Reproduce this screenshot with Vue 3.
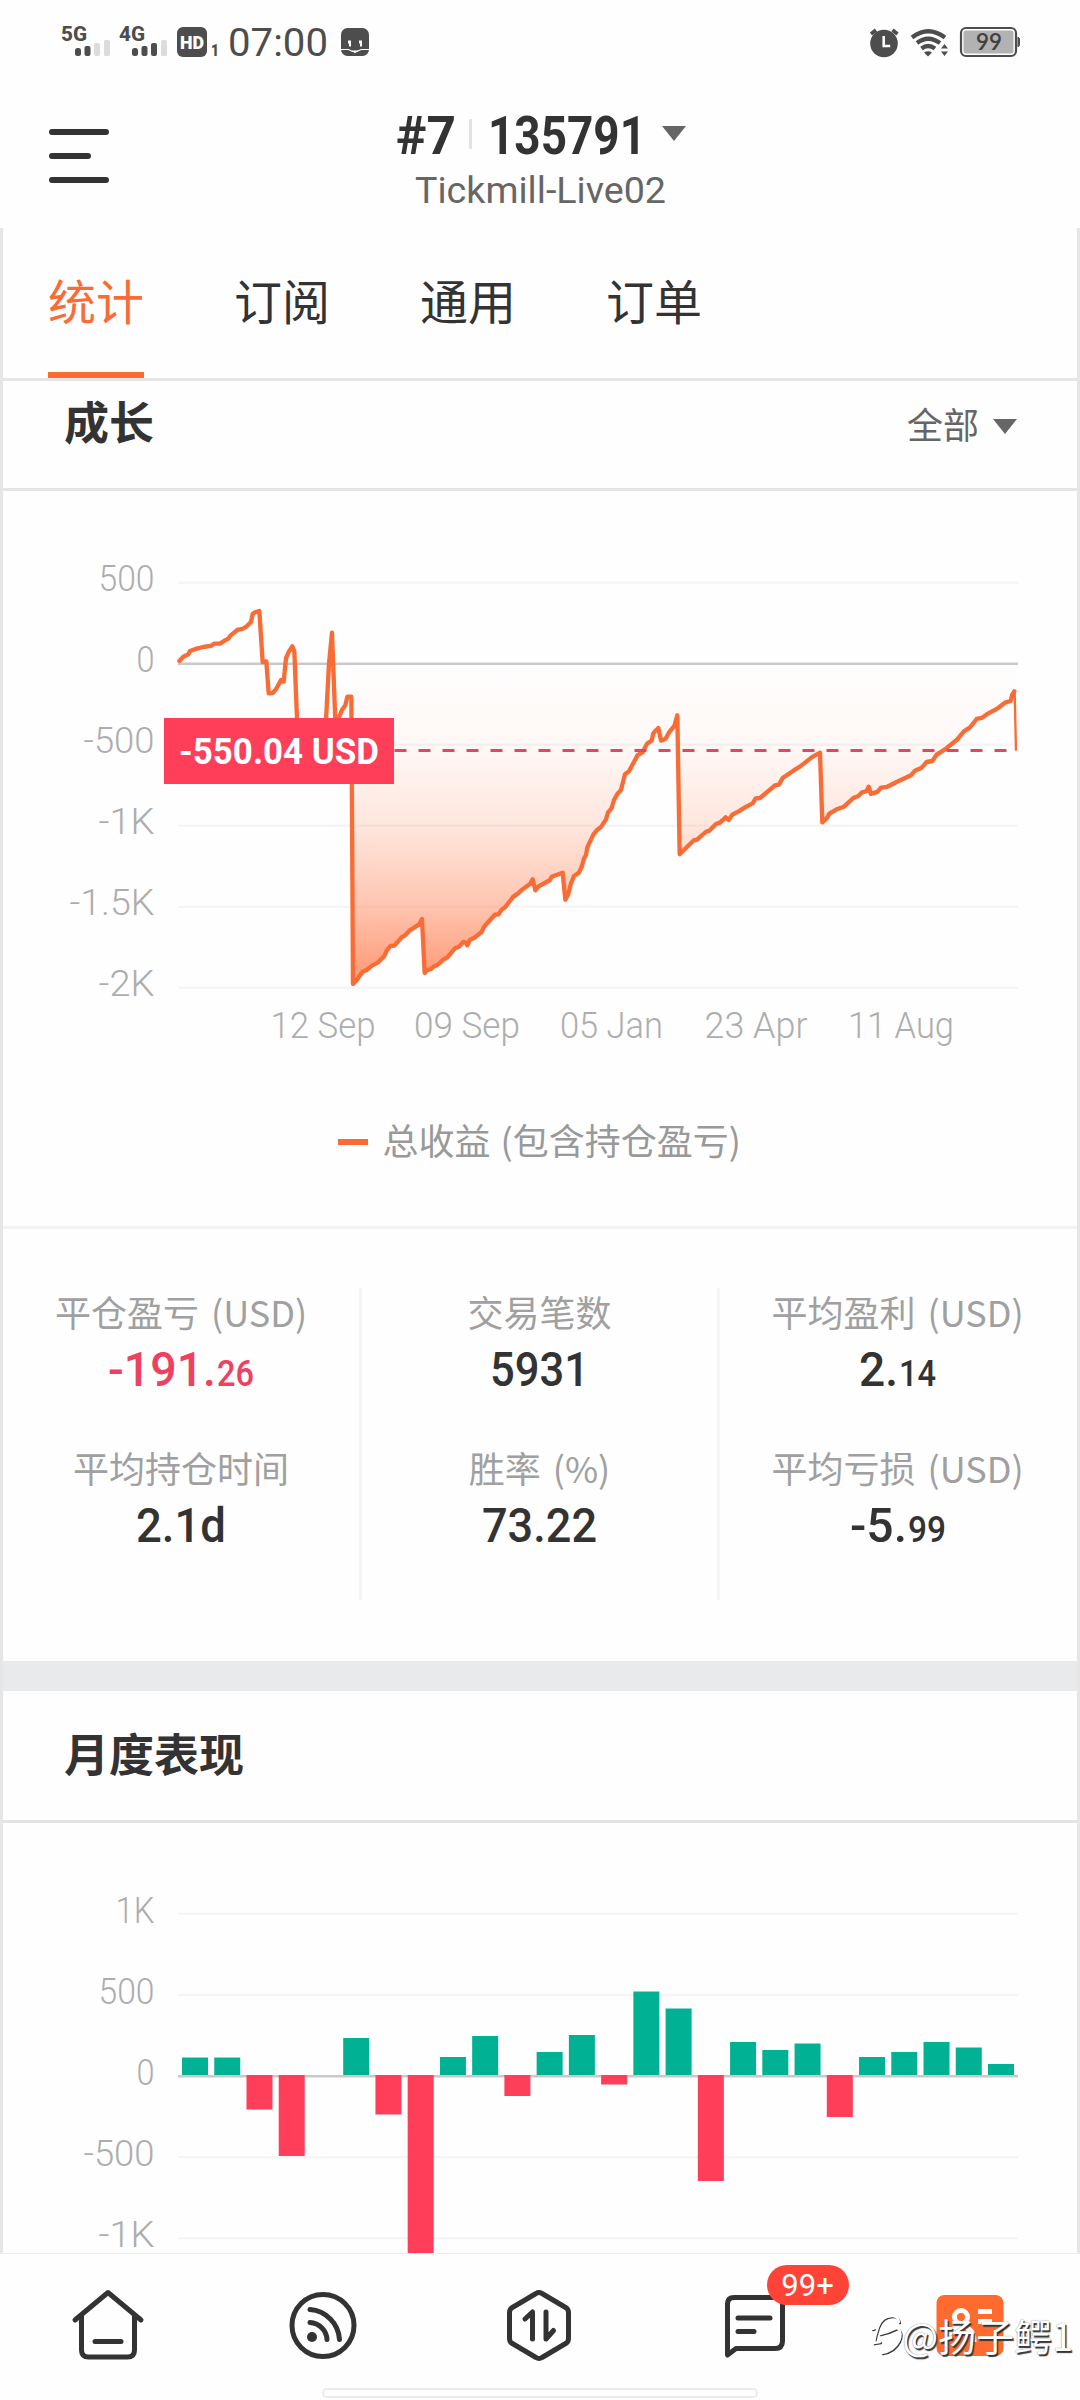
<script setup>
import { h } from 'vue'

const Fit = (p) =>
  h('svg', { width: p.w, height: p.box, style: 'display:block;overflow:visible;flex:none' }, [
    h('text', {
      x: 0,
      y: p.base,
      textLength: p.w,
      lengthAdjust: 'spacingAndGlyphs',
      fill: 'currentColor',
      'font-family': 'Roboto, sans-serif',
      'font-size': p.size,
      'font-weight': p.weight
    }, p.text)
  ])
Fit.props = ['text', 'w', 'box', 'base', 'size', 'weight']

const tabs = ['统计', '订阅', '通用', '订单']

const columns = [
  [
    { label: '平仓盈亏 (USD)', big: '-191.', bw: 108, small: '26', sw: 37, red: true },
    { label: '平均持仓时间', big: '2.1d', bw: 90 }
  ],
  [
    { label: '交易笔数', big: '5931', bw: 99 },
    { label: '胜率 (%)', big: '73.22', bw: 115 }
  ],
  [
    { label: '平均盈利 (USD)', big: '2.', bw: 39, small: '14', sw: 37 },
    { label: '平均亏损 (USD)', big: '-5.', bw: 57, small: '99', sw: 38 }
  ]
]

const growthTicks = [
  { t: '500', y: 92, w: 56 },
  { t: '0', y: 173, w: 18 },
  { t: '-500', y: 254, w: 71 },
  { t: '-1K', y: 335, w: 56 },
  { t: '-1.5K', y: 416, w: 85 },
  { t: '-2K', y: 497, w: 56 }
]
const dates = [
  { t: '12 Sep', x: 320, w: 105 },
  { t: '09 Sep', x: 464, w: 106 },
  { t: '05 Jan', x: 608.5, w: 103 },
  { t: '23 Apr', x: 753, w: 103 },
  { t: '11 Aug', x: 898, w: 106 }
]

// Curve samples, three units per pixel
const left = '388,363 400,350 415,343 420,333 440,326 460,321 485,317 492,311 510,311 522,303 535,296 542,286 562,270 577,267 590,259 603,246 608,222 615,217 628,213 638,366 649,364 656,460 668,459 678,448 693,420 701,425 708,355 716,336 727,319 733,335 742,560 760,640 800,650 827,560 837,371 846,278 856,545 868,530 876,510 886,496 892,470 904,470 909,1332 920,1320 938,1295 950,1290 967,1276 983,1268 1003,1248 1010,1232 1021,1218 1033,1217 1056,1191 1064,1187 1078,1172 1108,1153 1116,1137 1124,1299 1132,1291 1143,1287 1150,1280 1162,1275 1180,1259 1192,1252 1215,1225 1226,1221 1240,1206 1247,1207 1252,1216 1260,1199 1273,1193 1295,1176 1302,1160 1336,1123 1345,1124 1355,1109 1365,1102 1390,1070 1405,1060 1415,1050 1440,1032 1448,1018 1456,1051 1465,1040 1500,1020 1505,1010 1538,998'
const right = '16,1079 25,1062 33,1030 42,1008 57,998 66,978 72,955 78,945 82,922 100,884 112,869 122,862 138,838 144,818 155,804 162,780 172,762 183,750 195,703 207,694 217,675 233,645 247,638 262,610 275,602 280,580 287,572 295,564 303,602 317,596 328,576 343,558 352,526 359,943 400,902 412,898 428,884 440,874 447,873 468,852 480,848 497,832 506,840 517,824 536,814 555,802 578,790 587,775 600,774 645,736 657,734 668,714 700,692 720,680 755,652 780,638 787,847 800,835 808,821 830,808 852,800 880,774 895,768 905,758 920,753 926,740 933,762 953,755 963,743 980,741 1010,726 1053,706 1065,692 1085,683 1100,666 1117,663 1130,644 1155,628 1175,612 1190,600 1212,574 1230,562 1250,537 1265,534 1285,520 1310,507 1335,488 1352,483 1357,463 1363,454'
const parse = (s, dx) => s.split(' ').map((p) => { const [x, y] = p.split(',').map(Number); return [x + dx, y] })
const pts = [...parse(left, 0), ...parse(right, 1530)]
const line = 'M' + pts.map((p) => p.join(' ')).join('L')
const areaPts = pts.slice(pts.findIndex((p) => p[0] === 904))
const area = 'M904 371L' + areaPts.map((p) => p.join(' ')).join('L') + 'V371Z'

const monthTicks = [
  { t: '1K', y: 91, w: 39 },
  { t: '500', y: 172.3, w: 56 },
  { t: '0', y: 253.5, w: 18 },
  { t: '-500', y: 334.5, w: 71 },
  { t: '-1K', y: 415.5, w: 56 }
]
const months = [17.5, 17.5, -34.5, -81, 0, 37, -39.5, -190, 18, 39, -21, 23, 40, -9.5, 83.5, 66.5, -106, 33, 25, 31.5, -42, 18, 23, 33, 27.5, 11]
</script>

<template>
  <div class="screen">
    <div class="status">
      <svg class="status-left" width="340" height="84" viewBox="0 0 340 84">
        <g font-family="Roboto, sans-serif" fill="#4d4d4d">
          <text x="61" y="40.500" font-size="20.500" font-weight="800" textLength="26" lengthAdjust="spacingAndGlyphs">5G</text>
          <text x="119" y="40.500" font-size="20.500" font-weight="800" textLength="26" lengthAdjust="spacingAndGlyphs">4G</text>
          <text x="211" y="56" font-size="17" font-weight="900" textLength="8" lengthAdjust="spacingAndGlyphs">1</text>
          <text x="228" y="56" font-size="38.500" textLength="100" lengthAdjust="spacingAndGlyphs">07:00</text>
        </g>
        <g fill="#4d4d4d">
          <rect x="75" y="48" width="6" height="8" rx="2.500" /><rect x="84.500" y="46" width="6" height="10" rx="2" />
          <rect x="132" y="48" width="6" height="8" rx="2.500" /><rect x="141.500" y="46" width="6" height="10" rx="2" /><rect x="151" y="43" width="6" height="13" rx="2" />
        </g>
        <g fill="#dcdcdc">
          <rect x="94" y="43" width="6" height="13" rx="2" /><rect x="104" y="40" width="6" height="16" rx="1.500" />
          <rect x="161" y="40" width="6" height="16" rx="1.500" />
        </g>
        <rect x="177" y="27" width="30" height="30" rx="6" fill="#4d4d4d" />
        <text x="180" y="48.500" font-family="Roboto, sans-serif" font-size="19" font-weight="900" fill="#fff" textLength="24" lengthAdjust="spacingAndGlyphs">HD</text>
      </svg>
      <svg width="30" height="84" viewBox="340 0 30 84">
        <rect x="341" y="28" width="28" height="28" rx="6.500" fill="#4d4d4d" />
        <path d="M348 40.500h3v6h-2v-3h-1zM359 40.500h3v6h-2v-3h-1z" fill="#fff" />
        <path d="M341 49.500h7.500l4 2h4.500l4-2h8" fill="none" stroke="#fff" stroke-width="1.200" />
        <path d="M351.500 50.500h7l-3.500 2.800z" fill="#fff" />
      </svg>
      <svg class="status-right" width="152" height="84" viewBox="868 0 152 84">
        <circle cx="884" cy="43.500" r="13.800" fill="#4d4d4d" />
        <path d="M883.700 36v10h6.500" fill="none" stroke="#fff" stroke-width="2.600" />
        <path d="M871 34l5-4M892.500 30l5 4" stroke="#4d4d4d" stroke-width="3.600" />
        <g fill="none" stroke="#4d4d4d" stroke-width="4.200">
          <path d="M912 37.500Q928 25 945 37.500" /><path d="M917 43Q928 34.500 940 43" /><path d="M921.500 48.500Q928 43.500 935 48.500" />
        </g>
        <path d="M924 52.500q4-2.500 8 0l-4 4z" fill="#4d4d4d" />
        <path d="M941 48.500l3.500-4.500 3.500 4.500zM941 51.500h7l-3.500 4.500z" fill="#4d4d4d" />
        <rect x="961" y="28" width="55" height="28" rx="5" fill="#fff" stroke="#4d4d4d" stroke-width="2.200" />
        <rect x="963.500" y="30.500" width="50" height="23" rx="2.500" fill="#b2b2b2" />
        <path d="M1018 37q2 1 2 5t-2 5z" fill="#4d4d4d" stroke="#4d4d4d" />
        <text x="976" y="50" font-family="Lato, sans-serif" font-size="22" font-weight="600" fill="#404040" textLength="26" lengthAdjust="spacingAndGlyphs">99</text>
      </svg>
    </div>

    <header class="header">
      <svg class="menu" width="60" height="56" viewBox="0 0 60 56">
        <path d="M3 4H57M3 28H39M3 52H57" stroke="#333" stroke-width="6" stroke-linecap="round" />
      </svg>
      <div class="account">
        <div class="account-main">
          <Fit text="#7" :w="60" :box="56" :base="46" :size="53.5" :weight="700" />
          <i class="sep"></i>
          <Fit text="135791" :w="158" :box="56" :base="46" :size="53.500" :weight="700" />
          <svg class="caret" width="24" height="15" viewBox="0 0 24 15"><path d="M0 0h24L12 15z" fill="#666" /></svg>
        </div>
        <div class="server"><Fit text="Tickmill-Live02" :w="251" :box="40" :base="31" :size="36" :weight="400" /></div>
      </div>
    </header>

    <main class="panel">
      <nav class="tabs">
        <div v-for="(t, i) in tabs" :key="t" class="tab" :class="{ active: i === 0 }">{{ t }}</div>
      </nav>

      <section>
        <div class="head growth-head">
          <h2>成长</h2>
          <div class="range">全部<svg width="24" height="15" viewBox="0 0 24 15"><path d="M0 0h24L12 15z" fill="#666" /></svg></div>
        </div>
        <svg class="chart" width="1074" height="736" viewBox="0 0 1074 736">
          <defs>
            <linearGradient id="fill" gradientUnits="userSpaceOnUse" x1="0" y1="371" x2="0" y2="1343">
              <stop offset="0" stop-color="#ff6b35" stop-opacity="0" />
              <stop offset=".25" stop-color="#ff6b35" stop-opacity=".04" />
              <stop offset=".5" stop-color="#ff6b35" stop-opacity=".16" />
              <stop offset=".75" stop-color="#ff6b35" stop-opacity=".39" />
              <stop offset="1" stop-color="#ff6b35" stop-opacity=".72" />
            </linearGradient>
          </defs>
          <g v-for="t in growthTicks" :key="t.t">
            <rect x="175" :y="t.y - 1.500" width="840" height="2.500" :fill="t.t === '0' ? '#c9c9c9' : '#f5f5f5'" />
            <text class="tick" :x="151.500 - t.w" :y="t.y + 8" :textLength="t.w" lengthAdjust="spacingAndGlyphs">{{ t.t }}</text>
          </g>
          <g transform="translate(47 49) scale(.33333)">
            <path :d="area" fill="url(#fill)" />
            <path :d="line" fill="none" stroke="#f96c36" stroke-width="13" stroke-linejoin="round" stroke-linecap="round" />
            <path d="M2894 454L2898 632" stroke="#f96c36" stroke-width="7" fill="none" />
          </g>
          <path d="M391.500 259.500H1010" stroke="#d94a66" stroke-width="3" stroke-dasharray="12 12" />
          <rect x="161" y="227" width="230" height="66" fill="#ff3e59" />
          <text class="tag" x="176" y="272.500" textLength="200" lengthAdjust="spacingAndGlyphs">-550.04 USD</text>
          <text v-for="d in dates" :key="d.t" class="tick" :x="d.x - d.w / 2" y="547" :textLength="d.w" lengthAdjust="spacingAndGlyphs">{{ d.t }}</text>
          <rect x="335" y="648" width="30" height="6" fill="#f96c36" />
          <text class="legend" x="379.500" y="664">总收益 (包含持仓盈亏)</text>
        </svg>
        <div class="stats">
          <div v-for="(c, i) in columns" :key="i" class="col">
            <div v-for="s in c" :key="s.label" class="stat">
              <div class="label">{{ s.label }}</div>
              <div class="value" :class="{ red: s.red }">
                <Fit :text="s.big" :w="s.bw" :box="60" :base="48" :size="49" :weight="500" />
                <Fit v-if="s.small" :text="s.small" :w="s.sw" :box="60" :base="48" :size="36.500" :weight="500" />
              </div>
            </div>
          </div>
        </div>
      </section>

      <section class="monthly">
        <div class="head month-head"><h2>月度表现</h2></div>
        <svg class="chart" width="1074" height="430" viewBox="0 0 1074 430">
          <g v-for="t in monthTicks" :key="t.t">
            <rect x="175" :y="t.y - 1.500" width="840" height="2.500" :fill="t.t === '0' ? '#c9c9c9' : '#f5f5f5'" />
            <text class="tick" :x="151.500 - t.w" :y="t.y + 8.500" :textLength="t.w" lengthAdjust="spacingAndGlyphs">{{ t.t }}</text>
          </g>
          <rect v-for="(m, i) in months" :key="i" :x="179 + i * 32.240" :y="m > 0 ? 252 - m : 252" width="26" :height="Math.abs(m)" :fill="m > 0 ? '#00b293' : '#ff3e59'" />
        </svg>
      </section>
    </main>

    <footer class="dock">
      <svg class="item" width="80" height="80" viewBox="0 0 80 80">
        <g fill="none" stroke="#333" stroke-width="5" stroke-linecap="round" stroke-linejoin="round">
          <path d="M7 34L40 6.500 73 34" /><path d="M13.500 30V64q0 7 7 7H59.500q7 0 7-7V30" /><path d="M27 55.500H53" />
        </g>
      </svg>
      <svg class="item" width="80" height="80" viewBox="0 0 80 80">
        <g fill="none" stroke="#333" stroke-width="5" stroke-linecap="round">
          <circle cx="40" cy="39.500" r="31" /><path d="M27 23.500A32 32 0 0 1 56.500 53.500" /><path d="M27 36.500A18 18 0 0 1 44 53.500" />
        </g>
        <circle cx="29" cy="51" r="5" fill="#333" />
      </svg>
      <svg class="item" width="80" height="80" viewBox="0 0 80 80">
        <g fill="none" stroke="#333" stroke-width="5" stroke-linejoin="round" stroke-linecap="round">
          <path d="M37 7.500Q40 5.500 43 7.500L67.500 22Q69.500 23.500 69.500 27V52Q69.500 55.500 67.500 57L43 71.500Q40 73.500 37 71.500L12.500 57Q10.500 55.500 10.500 52V27Q10.500 23.500 12.500 22Z" />
          <path d="M26 33L33.500 26V53M47 26V53L54.500 44.500" stroke-width="5" />
        </g>
      </svg>
      <div class="item chat">
        <svg width="80" height="80" viewBox="0 0 80 80">
          <g fill="none" stroke="#333" stroke-width="5" stroke-linejoin="round" stroke-linecap="round">
            <path d="M12.500 69V18Q12.500 11.500 19 11.500H61Q67.500 11.500 67.500 18V55Q67.500 62.500 60 62.500H21Z" /><path d="M23 32H55M23 45.500H39" />
          </g>
        </svg>
        <span class="badge">99+</span>
      </div>
      <div class="item me">
        <svg width="80" height="80" viewBox="0 0 80 80">
          <rect x="6.500" y="9" width="67" height="61" rx="8" fill="#ff6b2e" />
          <g fill="none" stroke="#fff" stroke-width="5"><circle cx="31" cy="31" r="6.500" /><path d="M18 56q0-15 13-15t13 15" /><path d="M48 25.500h14M48 35.500h14" /></g>
        </svg>
        <div class="mark">
          <svg width="34" height="42" viewBox="0 0 34 42">
            <g fill="none" stroke-linecap="round">
              <path d="M2 15L8 13Q12 2 22 2 28 2 29 8M8 13Q5 22 4 29L10 28M10 20Q19 18 27 14 33 18 29 27 24 37 12 39" stroke="#3a3a3a" stroke-width="2.200" transform="translate(1 1.200)" />
              <path d="M2 15L8 13Q12 2 22 2 28 2 29 8M8 13Q5 22 4 29L10 28M10 20Q19 18 27 14 33 18 29 27 24 37 12 39" stroke="#fff" stroke-width="2.400" />
            </g>
          </svg>
          <span>@扬子鳄1</span>
        </div>
      </div>
      <div class="gesture"></div>
    </footer>
  </div>
</template>

<style>
body { background: #fefefe; }
</style>

<style scoped>
.screen {
  width: 1080px;
  height: 2400px;
  overflow: hidden;
  background: #fefefe;
  color: #333;
  font-family: "Noto Sans CJK SC", sans-serif;
  display: flex;
  flex-direction: column;
}
svg { display: block; flex: none; }
.status { height: 84px; display: flex; flex: none; }
.status-right { margin: 0 60px 0 auto; }
.header { height: 144px; display: flex; flex: none; }
.menu { margin: 44px 0 0 49px; }
.account { width: 292px; margin: 24px 0 0 287px; }
.account-main { display: flex; align-items: flex-start; color: #333; }
.sep { width: 3px; height: 30px; margin: 11px 16px 0 13px; background: #e3e3e3; }
.caret { margin: 18px 0 0 16px; }
.server { margin: 8px 0 0 19px; color: #666; }
.panel {
  height: 2025px;
  flex: none;
  box-sizing: border-box;
  border: solid #e6e6e6;
  border-width: 0 3px;
  overflow: hidden;
}
.tabs {
  height: 150px;
  display: flex;
  gap: 90px;
  padding-left: 45px;
  border-bottom: 3px solid #e6e6e6;
}
.tab { width: 96px; box-sizing: border-box; height: 150px; font-size: 48px; line-height: 143px; white-space: nowrap; }
.tab.active { color: #f96c36; border-bottom: 6px solid #f96c36; }
.head { display: flex; justify-content: space-between; border-bottom: 3px solid #e4e4e4; }
.growth-head { height: 107px; }
h2 { margin: 0 0 0 61px; font-size: 45px; font-weight: 700; }
.growth-head h2 { line-height: 80px; }
.range { display: flex; align-items: flex-start; color: #666; font-size: 36px; line-height: 84px; }
.range svg { margin: 38px 60px 0 14px; }
.tick { font: 300 36px Roboto, sans-serif; fill: #adadad; }
.tag { font: 700 36px Roboto, sans-serif; fill: #fff; }
.legend { font-size: 36px; fill: #999; word-spacing: 2px; }
.stats { height: 312px; padding: 59px 0 61px; display: flex; border-top: 3px solid #f3f3f3; margin-top: -1px; }
.col { width: 356px; }
.col + .col { width: 355px; border-left: 3px solid #f5f5f5; }
.stat { height: 156px; display: flex; flex-direction: column; align-items: center; }
.label { height: 50px; line-height: 46px; font-size: 36px; color: #a0a0a0; word-spacing: 4px; white-space: nowrap; }
.value { display: flex; gap: 1px; color: #333; }
.value.red { color: #ed415f; }
.monthly { border-top: 30px solid #e9eaec; }
.month-head { height: 129px; }
.month-head h2 { line-height: 124px; }
.dock {
  position: relative;
  height: 146px;
  border-top: 1px solid #ececec;
  padding-right: 2px;
  display: flex;
  flex: none;
  justify-content: space-around;
}
.item { margin-top: 32px; height: 80px; position: relative; }
.badge {
  position: absolute;
  left: 52px;
  top: -21px;
  width: 82px;
  height: 40px;
  border-radius: 20px;
  background: #ff4437;
  color: #fff;
  font: 31px/41px Roboto, sans-serif;
  text-align: center;
}
.mark {
  position: absolute;
  left: -60px;
  top: 24px;
  display: flex;
  align-items: center;
  color: #fff;
  font-size: 38px;
  line-height: 50px;
  white-space: nowrap;
}
.mark span { text-shadow: 1.5px 1.5px 1px #333, 0 0 1px #666; margin-left: -2px; }
.gesture {
  position: absolute;
  left: 322px;
  top: 134px;
  width: 436px;
  height: 10px;
  box-sizing: border-box;
  border: 2px solid #ebebeb;
  border-radius: 5px;
  background: #fefefe;
}
</style>
